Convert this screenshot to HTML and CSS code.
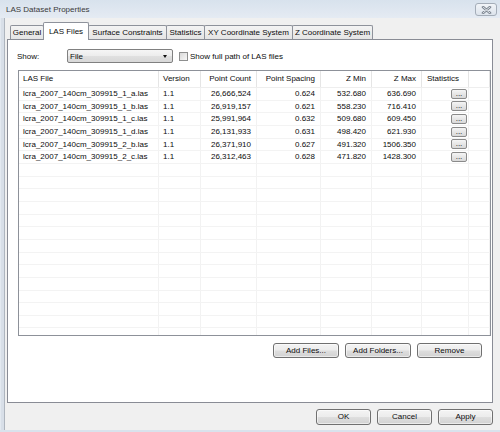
FILE: index.html
```html
<!DOCTYPE html>
<html>
<head>
<meta charset="utf-8">
<title>LAS Dataset Properties</title>
<link rel="stylesheet" href="styles.css">
</head>
<body>
<div class="window">
  <div class="titlebar">
    <span class="title">LAS Dataset Properties</span>
    <div class="close">
      <svg width="11" height="8" viewBox="0 0 11 8"><path d="M2 1 L9 7 M9 1 L2 7" stroke="#7e8792" stroke-width="2.6" stroke-linecap="round" fill="none"/><path d="M2 1 L9 7 M9 1 L2 7" stroke="#e9edf2" stroke-width="0.9" stroke-linecap="round" fill="none"/></svg>
    </div>
  </div>
  <div class="main">
    <div class="frame-left"></div>
    <div class="content">
      <div class="tabs">
        <div class="tab w-general">General</div>
        <div class="tab tab-active w-las">LAS Files</div>
        <div class="tab w-surface">Surface Constraints</div>
        <div class="tab w-stats">Statistics</div>
        <div class="tab w-xy">XY Coordinate System</div>
        <div class="tab w-z">Z Coordinate System</div>
      </div>
      <div class="panel">
        <div class="show-row">
          <span class="show-label">Show:</span>
          <div class="combo"><span class="combo-text">File</span><span class="arrow"></span></div>
          <span class="check"></span>
          <span class="check-label">Show full path of LAS files</span>
        </div>
        <div class="list">
          <div class="row head">
            <div class="cell">LAS File</div>
            <div class="cell">Version</div>
            <div class="cell num">Point Count</div>
            <div class="cell num">Point Spacing</div>
            <div class="cell num">Z Min</div>
            <div class="cell num">Z Max</div>
            <div class="cell stat-head">Statistics</div>
            <div class="cell"></div>
          </div>
          <div class="row"><div class="cell">lcra_2007_140cm_309915_1_a.las</div><div class="cell">1.1</div><div class="cell num">26,666,524</div><div class="cell num">0.624</div><div class="cell num">532.680</div><div class="cell num">636.690</div><div class="cell stat"><span class="dots">...</span></div><div class="cell"></div></div>
          <div class="row"><div class="cell">lcra_2007_140cm_309915_1_b.las</div><div class="cell">1.1</div><div class="cell num">26,919,157</div><div class="cell num">0.621</div><div class="cell num">558.230</div><div class="cell num">716.410</div><div class="cell stat"><span class="dots">...</span></div><div class="cell"></div></div>
          <div class="row"><div class="cell">lcra_2007_140cm_309915_1_c.las</div><div class="cell">1.1</div><div class="cell num">25,991,964</div><div class="cell num">0.632</div><div class="cell num">509.680</div><div class="cell num">609.450</div><div class="cell stat"><span class="dots">...</span></div><div class="cell"></div></div>
          <div class="row"><div class="cell">lcra_2007_140cm_309915_1_d.las</div><div class="cell">1.1</div><div class="cell num">26,131,933</div><div class="cell num">0.631</div><div class="cell num">498.420</div><div class="cell num">621.930</div><div class="cell stat"><span class="dots">...</span></div><div class="cell"></div></div>
          <div class="row"><div class="cell">lcra_2007_140cm_309915_2_b.las</div><div class="cell">1.1</div><div class="cell num">26,371,910</div><div class="cell num">0.627</div><div class="cell num">491.320</div><div class="cell num">1506.350</div><div class="cell stat"><span class="dots">...</span></div><div class="cell"></div></div>
          <div class="row"><div class="cell">lcra_2007_140cm_309915_2_c.las</div><div class="cell">1.1</div><div class="cell num">26,312,463</div><div class="cell num">0.628</div><div class="cell num">471.820</div><div class="cell num">1428.300</div><div class="cell stat"><span class="dots">...</span></div><div class="cell"></div></div>
          <div class="row"><div class="cell"></div><div class="cell"></div><div class="cell"></div><div class="cell"></div><div class="cell"></div><div class="cell"></div><div class="cell"></div><div class="cell"></div></div>
          <div class="row"><div class="cell"></div><div class="cell"></div><div class="cell"></div><div class="cell"></div><div class="cell"></div><div class="cell"></div><div class="cell"></div><div class="cell"></div></div>
          <div class="row"><div class="cell"></div><div class="cell"></div><div class="cell"></div><div class="cell"></div><div class="cell"></div><div class="cell"></div><div class="cell"></div><div class="cell"></div></div>
          <div class="row"><div class="cell"></div><div class="cell"></div><div class="cell"></div><div class="cell"></div><div class="cell"></div><div class="cell"></div><div class="cell"></div><div class="cell"></div></div>
          <div class="row"><div class="cell"></div><div class="cell"></div><div class="cell"></div><div class="cell"></div><div class="cell"></div><div class="cell"></div><div class="cell"></div><div class="cell"></div></div>
          <div class="row"><div class="cell"></div><div class="cell"></div><div class="cell"></div><div class="cell"></div><div class="cell"></div><div class="cell"></div><div class="cell"></div><div class="cell"></div></div>
          <div class="row"><div class="cell"></div><div class="cell"></div><div class="cell"></div><div class="cell"></div><div class="cell"></div><div class="cell"></div><div class="cell"></div><div class="cell"></div></div>
          <div class="row"><div class="cell"></div><div class="cell"></div><div class="cell"></div><div class="cell"></div><div class="cell"></div><div class="cell"></div><div class="cell"></div><div class="cell"></div></div>
          <div class="row"><div class="cell"></div><div class="cell"></div><div class="cell"></div><div class="cell"></div><div class="cell"></div><div class="cell"></div><div class="cell"></div><div class="cell"></div></div>
          <div class="row"><div class="cell"></div><div class="cell"></div><div class="cell"></div><div class="cell"></div><div class="cell"></div><div class="cell"></div><div class="cell"></div><div class="cell"></div></div>
          <div class="row"><div class="cell"></div><div class="cell"></div><div class="cell"></div><div class="cell"></div><div class="cell"></div><div class="cell"></div><div class="cell"></div><div class="cell"></div></div>
          <div class="row"><div class="cell"></div><div class="cell"></div><div class="cell"></div><div class="cell"></div><div class="cell"></div><div class="cell"></div><div class="cell"></div><div class="cell"></div></div>
          <div class="row"><div class="cell"></div><div class="cell"></div><div class="cell"></div><div class="cell"></div><div class="cell"></div><div class="cell"></div><div class="cell"></div><div class="cell"></div></div>
          <div class="row"><div class="cell"></div><div class="cell"></div><div class="cell"></div><div class="cell"></div><div class="cell"></div><div class="cell"></div><div class="cell"></div><div class="cell"></div></div>
        </div>
        <div class="list-buttons">
          <div class="btn w-files">Add Files...</div>
          <div class="btn w-files">Add Folders...</div>
          <div class="btn w-remove">Remove</div>
        </div>
      </div>
      <div class="dialog-buttons">
        <div class="btn btn-dlg">OK</div>
        <div class="btn btn-dlg">Cancel</div>
        <div class="btn btn-dlg">Apply</div>
      </div>
    </div>
  </div>
  <div class="frame-bottom"></div>
</div>
</body>
</html>
```

FILE: styles.css
```css
html, body {
  margin: 0;
  padding: 0;
}
body {
  width: 500px;
  height: 432px;
  overflow: hidden;
  background: #f0f0f0;
  font-family: "Liberation Sans", Arial, sans-serif;
  font-size: 8px;
  color: #0c0c0c;
}
.window {
  height: 432px;
  display: flex;
  flex-direction: column;
}
.titlebar {
  height: 18px;
  flex: none;
  display: flex;
  align-items: flex-start;
  background: linear-gradient(#d8e2ed, #e1e8f1 70%, #e5ebf3);
}
.title {
  padding: 4px 0 0 6px;
  line-height: 12px;
  color: #3a3a3a;
}
.close {
  margin: 3px 3px 0 auto;
  width: 22px;
  height: 13px;
  box-sizing: border-box;
  border: 1px solid #a4adb8;
  border-radius: 3px;
  background: linear-gradient(#f1f4f8, #dde4ec);
  display: flex;
  align-items: center;
  justify-content: center;
}
.main {
  flex: 1;
  display: flex;
  min-height: 0;
}
.frame-left {
  width: 6px;
  flex: none;
  background: linear-gradient(to right, #e3e9f0 0, #e3e9f0 1px, #d8dfe8 1px, #d8dfe8 4px, #aeb5be 4px, #aeb5be 5px, #f0f0f0 5px);
}
.frame-bottom {
  height: 2px;
  flex: none;
  background: #d9e2ec;
}
.content {
  flex: 1;
  min-width: 0;
  display: flex;
  flex-direction: column;
  padding: 4px 7px 0 0;
}
.tabs {
  display: flex;
  align-items: flex-end;
  height: 17px;
  padding-left: 4px;
  flex: none;
}
.tab {
  box-sizing: border-box;
  height: 14px;
  border: 1px solid #8e929b;
  border-bottom: none;
  border-radius: 2px 2px 0 0;
  margin-right: -1px;
  background: linear-gradient(#f4f4f4, #e4e4e4);
  text-align: center;
  line-height: 13px;
  white-space: nowrap;
  overflow: hidden;
}
.tab-active {
  height: 18px;
  margin-bottom: -1px;
  line-height: 17px;
  background: #fff;
  position: relative;
  z-index: 1;
}
.w-general { width: 34px; }
.w-las { width: 46px; }
.w-surface { width: 79px; }
.w-stats { width: 39px; }
.w-xy { width: 89px; }
.w-z { width: 81px; }

.panel {
  flex: none;
  margin-left: 1px;
  height: 364px;
  box-sizing: border-box;
  border: 1px solid #898c95;
  background: #fff;
  padding: 9px 1px 0 10px;
}
.show-row {
  display: flex;
  align-items: center;
  height: 14px;
}
.show-label {
  width: 50px;
  margin-left: -1px;
}
.combo {
  width: 106px;
  height: 14px;
  box-sizing: border-box;
  border: 1px solid #808080;
  border-radius: 2px;
  background: linear-gradient(#f5f5f5 0, #ececec 50%, #e0e0e0 50%, #d8d8d8 100%);
  display: flex;
  align-items: center;
  padding: 0 5px 0 2px;
}
.combo-text {
  flex: 1;
}
.arrow {
  width: 0;
  height: 0;
  border-left: 2.5px solid transparent;
  border-right: 2.5px solid transparent;
  border-top: 3px solid #111;
}
.check {
  margin-left: 6px;
  width: 9px;
  height: 9px;
  box-sizing: border-box;
  border: 1px solid #8e8f8f;
  background: linear-gradient(135deg, #d9d9d9, #f8f8f8);
}
.check-label {
  margin-left: 2px;
}

.list {
  margin-top: 7px;
  width: 473px;
  height: 266px;
  box-sizing: border-box;
  border: 1px solid #8d9199;
  overflow: hidden;
}
.row {
  display: grid;
  grid-template-columns: 140px 42px 56px 64px 51px 50px 47px 1fr;
  height: 12.67px;
  box-sizing: border-box;
  border-bottom: 1px solid #f3f3f3;
}
.row.head {
  height: 17px;
  border-bottom: 1px solid #eeeeee;
}
.cell {
  box-sizing: border-box;
  border-right: 1px solid #f2f2f2;
  padding: 0 4px;
  line-height: 12px;
  white-space: nowrap;
  overflow: hidden;
}
.row.head .cell {
  line-height: 16px;
  border-right-color: #e5e5e5;
}
.num {
  text-align: right;
  padding-right: 5px;
}
.stat-head {
  padding-left: 5px;
}
.stat {
  display: flex;
  justify-content: flex-end;
  align-items: center;
  padding-right: 1px;
}
.dots {
  width: 16px;
  height: 10px;
  box-sizing: border-box;
  border: 1px solid #8a8a8a;
  border-radius: 2px;
  background: linear-gradient(#f5f5f5, #e6e6e6 50%, #d9d9d9);
  text-align: center;
  line-height: 7px;
  font-size: 8px;
}

.btn {
  box-sizing: border-box;
  height: 15px;
  border: 1px solid #707070;
  border-radius: 3px;
  background: linear-gradient(#f4f4f4 0, #ececec 48%, #dedede 52%, #d2d2d2 100%);
  box-shadow: inset 0 0 0 1px rgba(255, 255, 255, 0.55);
  text-align: center;
  line-height: 13px;
  white-space: nowrap;
}
.list-buttons {
  display: flex;
  justify-content: flex-end;
  gap: 6px;
  margin-top: 7px;
  margin-right: 9px;
}
.w-files { width: 66px; }
.w-remove { width: 65px; }
.dialog-buttons {
  display: flex;
  justify-content: flex-end;
  gap: 6px;
  margin-top: 6px;
}
.btn-dlg {
  width: 55px;
  height: 16px;
  line-height: 14px;
}
```
